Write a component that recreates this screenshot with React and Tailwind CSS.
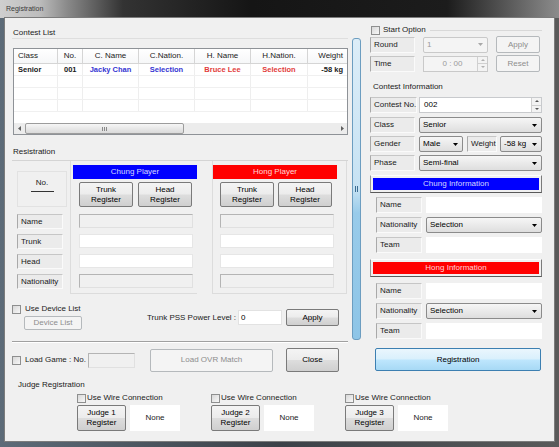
import React from "react";

const cols = [
  { w: "w-[44px]", h: "Class", d: "Senior", ha: "justify-start pl-[4px]", da: "justify-start pl-[4px]", c: "text-[#1a1a1a]" },
  { w: "w-[25px]", h: "No.", d: "001", ha: "justify-center", da: "justify-start pl-[6px]", c: "text-[#1a1a1a]" },
  { w: "w-[56px]", h: "C. Name", d: "Jacky Chan", ha: "justify-center", da: "justify-center", c: "text-[#3434d2]" },
  { w: "w-[56px]", h: "C.Nation.", d: "Selection", ha: "justify-center", da: "justify-center", c: "text-[#3434d2]" },
  { w: "w-[56px]", h: "H. Name", d: "Bruce Lee", ha: "justify-center", da: "justify-center", c: "text-[#e23b3b]" },
  { w: "w-[57px]", h: "H.Nation.", d: "Selection", ha: "justify-center", da: "justify-center", c: "text-[#e23b3b]" },
  { w: "w-[39px]", h: "Weight", d: "-58 kg", ha: "justify-end pr-[4px]", da: "justify-end pr-[4px]", c: "text-[#1a1a1a]" },
];

function Check({ className = "" }) {
  return (
    <span
      className={`inline-block w-[9px] h-[9px] shrink-0 border border-[#8e8f8f] bg-[linear-gradient(135deg,#d8d8d8,#f7f7f7)] ${className}`}
    />
  );
}

function Btn({ children, className = "", disabled = false }) {
  return (
    <div
      className={`flex items-center justify-center text-center leading-[10px] rounded-[2px] border shrink-0 ${
        disabled
          ? "border-[#b5b9bc] bg-[#f4f4f4] text-[#8d8d8d]"
          : "border-[#7a7a7a] bg-[linear-gradient(#f4f4f4_0%,#ececec_48%,#dddddd_52%,#cfcfcf_100%)] text-black"
      } ${className}`}
    >
      {children}
    </div>
  );
}

function Lbl({ children, className = "" }) {
  return (
    <div
      className={`flex items-center pl-[3px] shrink-0 bg-[#ebebeb] border border-t-[#c6c6c6] border-l-[#a9a9a9] border-r-[#fafafa] border-b-[#fafafa] text-[#1a1a1a] ${className}`}
    >
      {children}
    </div>
  );
}

function Arrow({ color = "#000" }) {
  return (
    <svg width="5" height="3" viewBox="0 0 5 3">
      <path d="M0 0h5L2.5 3z" fill={color} />
    </svg>
  );
}

function Combo({ value, className = "", disabled = false }) {
  return (
    <div
      className={`flex items-center justify-between pl-[3px] pr-[4px] shrink-0 rounded-[2px] border ${
        disabled
          ? "border-[#c9c9c9] bg-[#f4f4f4] text-[#9a9a9a]"
          : "border-[#8b8b8b] bg-[linear-gradient(#f6f6f6,#dedede)] text-black"
      } ${className}`}
    >
      <span>{value}</span>
      <Arrow color={disabled ? "#a8a8a8" : "#000"} />
    </div>
  );
}

function Spin({ color = "#555" }) {
  return (
    <div className="flex flex-col w-[10px] h-full border-l border-[#d0d0d0]">
      <div className="flex-1 flex items-center justify-center border-b border-[#d0d0d0] bg-[#f3f3f3]">
        <svg width="4" height="2" viewBox="0 0 4 2">
          <path d="M0 2h4L2 0z" fill={color} />
        </svg>
      </div>
      <div className="flex-1 flex items-center justify-center bg-[#f3f3f3]">
        <svg width="4" height="2" viewBox="0 0 4 2">
          <path d="M0 0h4L2 2z" fill={color} />
        </svg>
      </div>
    </div>
  );
}

function Input({ className = "", disabled = false, children }) {
  return (
    <div
      className={`flex items-center pl-[3px] shrink-0 border ${
        disabled
          ? "bg-[#f0f0f0] border-t-[#b4b4b4] border-l-[#b4b4b4] border-r-[#e0e0e0] border-b-[#e0e0e0]"
          : "bg-white border-[#e6e6e6]"
      } ${className}`}
    >
      {children}
    </div>
  );
}

function InfoBar({ color, text }) {
  return (
    <div className="mt-[4px] ml-[5px] w-[172px] h-[18px] p-[2px] border border-t-[#fdfdfd] border-l-[#9a9a9a] border-r-[#7a7a7a] border-b-[#5a5a5a]">
      <div className={`h-full flex items-center justify-center ${color}`}>{text}</div>
    </div>
  );
}

function InfoRows({ first = "mt-[4px]" }) {
  return (
    <>
      <div className={`${first} h-[16px] flex`}>
        <Lbl className="ml-[11px] w-[46px] h-[16px]">Name</Lbl>
        <div className="ml-[4px] w-[116px] h-[16px] bg-white" />
      </div>
      <div className="mt-[4px] h-[16px] flex">
        <Lbl className="ml-[11px] w-[46px] h-[16px]">Nationality</Lbl>
        <Combo value="Selection" className="ml-[4px] w-[116px] h-[16px]" />
      </div>
      <div className="mt-[4px] h-[16px] flex">
        <Lbl className="ml-[11px] w-[46px] h-[16px]">Team</Lbl>
        <div className="ml-[4px] w-[116px] h-[16px] bg-white" />
      </div>
    </>
  );
}

function PlayerGroup({ bar, outer, inner, gap }) {
  return (
    <div className={`h-[133px] border-l border-b border-[#dcdcdc] flex flex-col ${outer}`}>
      {bar}
      <div className={`mt-[3px] flex ${inner} ${gap}`}>
        <Btn className="w-[54px] h-[25px]">
          Trunk
          <br />
          Register
        </Btn>
        <Btn className="w-[54px] h-[25px]">
          Head
          <br />
          Register
        </Btn>
      </div>
      <Input disabled className={`mt-[7px] w-[114px] h-[14px] ${inner}`} />
      <Input className={`mt-[6px] w-[114px] h-[14px] ${inner}`} />
      <Input className={`mt-[6px] w-[114px] h-[14px] ${inner}`} />
      <Input disabled className={`mt-[6px] w-[114px] h-[14px] ${inner}`} />
    </div>
  );
}

function Judge({ n }) {
  return (
    <div className="w-[134px] flex flex-col">
      <div className="h-[10px] flex items-center gap-[1px]">
        <Check />
        <span className="text-[#1a1a1a]">Use Wire Connection</span>
      </div>
      <div className="mt-[2px] flex">
        <Btn className="w-[49px] h-[26px]">
          Judge {n}
          <br />
          Register
        </Btn>
        <div className="ml-[4px] w-[50px] h-[26px] bg-white flex items-center justify-center text-[#1a1a1a]">
          None
        </div>
      </div>
    </div>
  );
}

export default function App() {
  return (
    <div className="w-[559px] h-[447px] bg-[linear-gradient(90deg,#5d6b78,#3c4148_50%,#5a5a5a)] flex flex-col font-['Liberation_Sans',Arial,sans-serif] overflow-hidden">
      {/* title bar */}
      <div className="h-[18px] shrink-0 flex items-center pl-[6px] text-[7px] text-[#3a3a3a] bg-[linear-gradient(90deg,#cfcfcf_0%,#bdbdbd_7%,#8a8a8a_12%,#333333_22%,#151515_45%,#1c1c1c_80%,#8c8c8c_100%)]">
        Registration
      </div>

      {/* client area */}
      <div className="ml-[5px] w-[549px] h-[423px] bg-[#f0f0f0] ring-1 ring-[#7c7c7c] flex flex-col text-[8px] leading-[10px] text-black whitespace-nowrap">
        <div className="flex h-[357px]">
          {/* left column */}
          <div className="w-[344px] flex flex-col">
            <div className="h-[21px] ml-[7px] w-[336px] border-b border-[#dedede] pt-[10px] pl-[1px] text-[#1a1a1a]">
              Contest List
            </div>

            {/* contest table */}
            <div className="mt-[9px] ml-[8px] w-[335px] h-[87px] border border-[#8e9297] bg-white flex flex-col">
              <div className="flex h-[15px] border-b border-[#d5d5d5] bg-[linear-gradient(#ffffff,#f6f7f8)]">
                {cols.map((c, i) => (
                  <div
                    key={i}
                    className={`${c.w} h-full flex items-center text-[#1a1a1a] ${c.ha} ${
                      i < 6 ? "border-r border-[#d5d5d5]" : ""
                    }`}
                  >
                    {c.h}
                  </div>
                ))}
              </div>
              {[0, 1, 2, 3].map((r) => (
                <div key={r} className="flex h-[12px] border-b border-[#f0f0f0]">
                  {cols.map((c, i) => (
                    <div
                      key={i}
                      className={`${c.w} h-full flex items-center font-bold text-[7.5px] ${c.c} ${c.da} ${
                        i < 6 ? "border-r border-[#eeeeee]" : ""
                      }`}
                    >
                      {r === 0 ? c.d : ""}
                    </div>
                  ))}
                </div>
              ))}
              <div className="flex-1" />
              <div className="h-[11px] flex bg-[#ececec]">
                <div className="w-[11px] flex items-center justify-center">
                  <svg width="3" height="5" viewBox="0 0 3 5">
                    <path d="M3 0v5L0 2.5z" fill="#606060" />
                  </svg>
                </div>
                <div className="w-[159px] h-full rounded-[2px] border border-[#9c9c9c] bg-[linear-gradient(#f6f6f6,#dadada)] flex items-center justify-center gap-[1px]">
                  <span className="w-[1px] h-[4px] bg-[#8a8a8a]" />
                  <span className="w-[1px] h-[4px] bg-[#8a8a8a]" />
                  <span className="w-[1px] h-[4px] bg-[#8a8a8a]" />
                </div>
                <div className="flex-1" />
                <div className="w-[10px] flex items-center justify-center">
                  <svg width="3" height="5" viewBox="0 0 3 5">
                    <path d="M0 0v5L3 2.5z" fill="#606060" />
                  </svg>
                </div>
              </div>
            </div>

            <div className="h-[26px] ml-[7px] w-[336px] border-b border-[#d4d4d4] flex items-end pb-[3px] pl-[1px] text-[#1a1a1a]">
              Resistration
            </div>

            {/* player registration */}
            <div className="flex h-[134px]">
              <div className="ml-[12px] w-[50px] flex flex-col">
                <div className="mt-[10px] h-[36px] border border-[#e2e2e2] flex flex-col items-center pt-[6px]">
                  <span className="text-[#1a1a1a]">No.</span>
                  <span className="mt-[3px] w-[23px] h-[1px] bg-[#333]" />
                </div>
                <Lbl className="mt-[7px] w-[46px] h-[15px]">Name</Lbl>
                <Lbl className="mt-[5px] w-[46px] h-[15px]">Trunk</Lbl>
                <Lbl className="mt-[5px] w-[46px] h-[15px]">Head</Lbl>
                <Lbl className="mt-[5px] w-[46px] h-[15px]">Nationality</Lbl>
              </div>
              <PlayerGroup
                outer="ml-[3px] w-[127px]"
                inner="ml-[8px]"
                gap="gap-[5px]"
                bar={
                  <div className="mt-[4px] ml-[2px] w-[124px] h-[14px] bg-[#0000ff] text-[#d4d8ff] flex items-center justify-center">
                    Chung Player
                  </div>
                }
              />
              <PlayerGroup
                outer="ml-[15px] w-[135px] border-r"
                inner="ml-[7px]"
                gap="gap-[4px]"
                bar={
                  <div className="mt-[4px] w-[124px] h-[14px] bg-[#ff0000] text-[#ffd6d6] flex items-center justify-center">
                    Hong Player
                  </div>
                }
              />
            </div>

            {/* device list / power level */}
            <div className="mt-[9px] flex items-start">
              <div className="w-[135px] pl-[7px] flex flex-col">
                <div className="h-[10px] flex items-center gap-[4px]">
                  <Check />
                  <span className="text-[#1a1a1a]">Use Device List</span>
                </div>
                <Btn disabled className="mt-[2px] ml-[12px] w-[58px] h-[14px]">
                  Device List
                </Btn>
              </div>
              <div className="ml-[7px] mt-[5px] h-[17px] flex items-center">
                <span className="w-[91px] text-[#1a1a1a]">Trunk PSS Power Level :</span>
                <div className="w-[44px] h-[15px] bg-white border border-[#e2e2e2] flex items-center pl-[2px]">0</div>
                <Btn className="ml-[4px] w-[53px] h-[17px]">Apply</Btn>
              </div>
            </div>

            <div className="mt-[11px] ml-[7px] w-[336px] h-[2px] border-t border-[#a0a0a0] border-b border-b-white" />

            {/* load game */}
            <div className="mt-[5px] h-[24px] flex items-center">
              <Check className="ml-[7px]" />
              <span className="ml-[4px] w-[59px] text-[#1a1a1a]">Load Game : No.</span>
              <Input disabled className="ml-[4px] w-[47px] h-[15px]" />
              <Btn disabled className="ml-[15px] w-[123px] h-[23px]">
                Load OVR Match
              </Btn>
              <Btn className="ml-[13px] w-[53px] h-[24px]">Close</Btn>
            </div>
          </div>

          {/* splitter */}
          <div className="w-[16px]">
            <div className="ml-[3px] mt-[20px] w-[9px] h-[302px] rounded-[3px] border border-[#6c9dc0] bg-[linear-gradient(#dcedf8_0%,#c6e2f3_50%,#98cbea_58%,#8ec5e7_100%)] flex items-center justify-center gap-[1px]">
              <span className="w-[1px] h-[6px] bg-[#3d6d92]" />
              <span className="w-[1px] h-[6px] bg-[#3d6d92]" />
            </div>
          </div>

          {/* right column */}
          <div className="w-[189px] flex flex-col">
            <div className="mt-[7px] h-[10px] flex items-center">
              <Check className="ml-[6px]" />
              <span className="ml-[3px] text-[#1a1a1a]">Start Option</span>
              <span className="flex-1 ml-[4px] mr-[12px] border-t border-[#d8d8d8]" />
            </div>
            <div className="mt-[1px] h-[17px] flex items-center">
              <Lbl className="ml-[5px] w-[45px] h-[16px]">Round</Lbl>
              <Combo disabled value="1" className="ml-[8px] w-[65px] h-[16px]" />
              <Btn disabled className="ml-[8px] w-[44px] h-[17px]">
                Apply
              </Btn>
            </div>
            <div className="mt-[2px] h-[17px] flex items-center">
              <Lbl className="ml-[5px] w-[45px] h-[16px]">Time</Lbl>
              <div className="ml-[8px] w-[65px] h-[16px] border border-[#c9c9c9] bg-[#f4f4f4] text-[#9a9a9a] flex">
                <div className="flex-1 flex items-center justify-center pl-[4px]">0 : 00</div>
                <Spin color="#b0b0b0" />
              </div>
              <Btn disabled className="ml-[8px] w-[44px] h-[17px]">
                Reset
              </Btn>
            </div>

            <div className="mt-[10px] h-[10px] pl-[8px] text-[#1a1a1a]">Contest Information</div>

            <div className="mt-[5px] h-[16px] flex">
              <Lbl className="ml-[5px] w-[47px] h-[16px] pl-[2px]">Contest No.</Lbl>
              <div className="ml-[2px] w-[123px] h-[16px] bg-white border border-[#c8cacd] flex">
                <div className="flex-1 flex items-center pl-[4px]">002</div>
                <Spin />
              </div>
            </div>
            <div className="mt-[4px] h-[16px] flex">
              <Lbl className="ml-[5px] w-[45px] h-[16px]">Class</Lbl>
              <Combo value="Senior" className="ml-[4px] w-[123px] h-[16px]" />
            </div>
            <div className="mt-[3px] h-[16px] flex">
              <Lbl className="ml-[5px] w-[45px] h-[16px]">Gender</Lbl>
              <Combo value="Male" className="ml-[4px] w-[44px] h-[16px]" />
              <Lbl className="ml-[4px] w-[30px] h-[16px]">Weight</Lbl>
              <Combo value="-58 kg" className="ml-[3px] w-[42px] h-[16px]" />
            </div>
            <div className="mt-[3px] h-[16px] flex">
              <Lbl className="ml-[5px] w-[45px] h-[16px]">Phase</Lbl>
              <Combo value="Semi-final" className="ml-[4px] w-[123px] h-[16px]" />
            </div>

            <InfoBar color="bg-[#0000ff] text-[#d4d8ff]" text="Chung Information" />
            <InfoRows />
            <div className="mt-[2px]" />
            <InfoBar color="bg-[#ff0000] text-[#ffd6d6]" text="Hong Information" />
            <InfoRows first="mt-[6px]" />

            <div className="mt-[9px] ml-[10px] w-[166px] h-[23px] rounded-[2px] border border-[#3c7fb1] bg-[linear-gradient(#eaf6fd_0%,#d9f0fc_48%,#bee6fd_52%,#a7d9f5_100%)] flex items-center justify-center text-black">
              Registration
            </div>
          </div>
        </div>

        {/* judge registration */}
        <div className="mt-[5px] ml-[13px] h-[10px] text-[#1a1a1a]">Judge Registration</div>
        <div className="mt-[3px] ml-[72px] flex">
          <Judge n={1} />
          <Judge n={2} />
          <Judge n={3} />
        </div>
      </div>
    </div>
  );
}
